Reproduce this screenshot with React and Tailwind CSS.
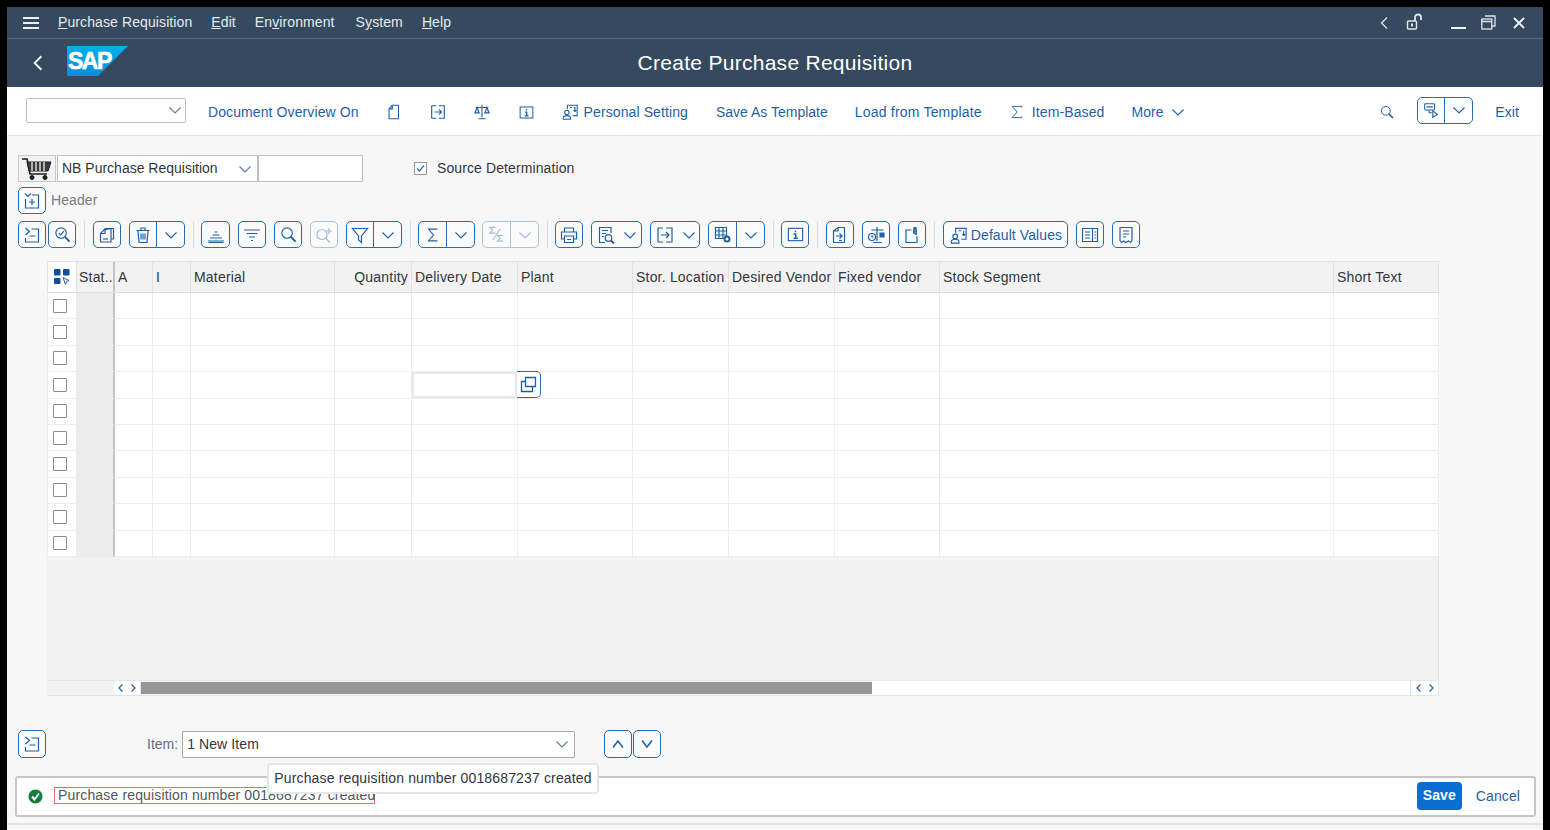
import React from 'react';

const S = ({ children, s = 20, vb = 20, sw = 1.2, className = '' }) => (
  <svg width={s} height={s} viewBox={`0 0 ${vb} ${vb}`} fill="none" stroke="currentColor" strokeWidth={sw} className={`shrink-0 ${className}`}>{children}</svg>
);
const Chev = ({ s = 14, className = '' }) => (
  <S s={s} vb={14} sw={1.1} className={className}><path d="M1.500 4.500 7 10l5.500-5.500" /></S>
);
const Doc = ({ s = 18 }) => <S s={s}><path d="M8 2.500h7v15H4.500V6.500z" /><path d="M8 2.500v4h-3.500" strokeWidth="1.500" /></S>;
const ExportI = ({ s = 18 }) => <S s={s}><path d="M8 3H3v14h5M11 3h6v14h-6" /><path d="M6 10h8M11 7l3 3-3 3" /></S>;
const Scale = ({ s = 18 }) => <S s={s}><path d="M10 2v14M6 17.500h8M3 5h14" /><path d="M4.500 5 2 11h5zM15.500 5 13 11h5z" fill="currentColor" fillOpacity=".25" /></S>;
const Info = ({ s = 17 }) => <S s={s}><rect x="2.500" y="3.500" width="15" height="13" /><path d="M10 6v1.600M8 9.500h2.200V14M8 14h4.400" strokeWidth="1.600" /></S>;
const Person = () => <S s={18}><circle cx="6.500" cy="10.500" r="2.400" /><path d="M2.500 18v-1.500c0-1.500 1.500-2.500 4-2.500s4 1 4 2.500V18z" /><path d="M7 7V2.500h11V14h-5M10 5h2M14 5h2M14 8l1.500 1.500L17 8M15.500 5v4" /></S>;
const DefI = () => <S s={19}><circle cx="6.500" cy="11" r="2.400" /><path d="M2.500 18v-1.500c0-1.500 1.500-2.500 4-2.500s4 1 4 2.500V18z" /><path d="M7 7V2.500h11V14h-5M10 5h3M15.500 5v5M14 8.500l1.500 1.500L17 8.500" /></S>;
const Sigma = ({ s = 18 }) => <S s={s}><path d="M15 3.500H5l5.500 6.500L5 16.500h10" /></S>;
const Search = ({ s = 19 }) => <S s={s}><circle cx="8.500" cy="8.500" r="5.500" /><path d="m12.500 12.500 5 5" strokeWidth="2.200" /></S>;
const Expand = ({ plus }) => plus ? (
  <S><path d="m3 2.500 3 3 3-3M10 4h6.500v13H3.500V8" /><path d="M10 8v6M7 11h6" /></S>
) : (
  <S><path d="m3.500 3 4 3.500-4 3.500M9.500 4h7v13H3.500v-4M7.500 11h6" /></S>
);

const Btn = ({ children, w = 'w-[28px]', off, tall, className = '' }) => (
  <div className={`${tall ? 'h-[28px]' : 'h-[27px]'} ${w} shrink-0 flex items-center justify-center rounded-[5px] border bg-[#fbfbfb] ${off ? 'border-[#a9c4e0] text-[#a0bedc]' : 'border-[#2a6ab0] text-[#1f5fa6]'} ${className}`}>{children}</div>
);
const Split = ({ children, w = 'w-[57px]', off, className = '' }) => (
  <div className={`h-[27px] ${w} shrink-0 flex rounded-[5px] border bg-[#fbfbfb] ${off ? 'border-[#a9c4e0] text-[#a0bedc]' : 'border-[#2a6ab0] text-[#1f5fa6]'} ${className}`}>
    <div className={`flex-1 flex items-center justify-center border-r ${off ? 'border-[#a9c4e0]' : 'border-[#2a6ab0]'}`}>{children}</div>
    <div className="w-[27px] flex items-center justify-center"><Chev /></div>
  </div>
);
const Sep = ({ className = '' }) => <div className={`w-px h-[27px] bg-[#dcdcdc] shrink-0 ${className}`} />;

const widths = ['w-[30px]', 'w-[38px]', 'w-[38px]', 'w-[38px]', 'w-[144px]', 'w-[77px]', 'w-[106px]', 'w-[115px]', 'w-[96px]', 'w-[106px]', 'w-[105px]', 'w-[394px]', 'w-[105px]'];
const heads = ['', 'Stat..', 'A', 'I', 'Material', 'Quantity', 'Delivery Date', 'Plant', 'Stor. Location', 'Desired Vendor', 'Fixed vendor', 'Stock Segment', 'Short Text'];

const rows = [0, 1, 2, 3, 4, 5, 6, 7, 8, 9];

export default function App() {
  return (
    <div className="relative w-[1550px] h-[830px] bg-black overflow-hidden pl-[7px] pt-[7px] font-['Liberation_Sans',sans-serif] tracking-[.1px]">
      <div className="w-[1536px] h-[823px] bg-[#f7f7f7] flex flex-col text-[#32363a]">
        {/* menu bar */}
        <div className="h-[32px] bg-[#354a5f] border-b border-[#536a80] flex items-center text-[#e6ebf0] text-[14px] shrink-0">
          <svg width="16" height="12" viewBox="0 0 16 12" className="ml-[16px]" fill="#eef2f6"><rect width="16" height="2" /><rect y="5" width="16" height="2" /><rect y="10" width="16" height="2" /></svg>
          <span className="ml-[19px]"><u>P</u>urchase Requisition</span>
          <span className="ml-[19px]"><u>E</u>dit</span>
          <span className="ml-[19px]">En<u>v</u>ironment</span>
          <span className="ml-[21px]">S<u>y</u>stem</span>
          <span className="ml-[19px]"><u>H</u>elp</span>
          <div className="ml-auto flex items-center">
            <S s={14} vb={14} sw={1.200}><path d="M10 1.500 4.500 7l5.500 5.500" /></S>
            <svg width="18" height="18" viewBox="0 0 18 18" fill="none" stroke="#dfe5ea" strokeWidth="1.400" className="ml-[15px] -mt-[2px]"><rect x="1.500" y="8" width="9" height="8" rx="1" /><path d="M6 10.500v3" strokeWidth="2" /><path d="M9 8V4.500C9 2.500 10.500 1.500 12 1.500s3 1 3 3V7" strokeWidth="1.800" /></svg>
            <div className="ml-[27px] mt-[10px] w-[15px] h-[2px] bg-[#eef2f6]" />
            <svg width="15" height="15" viewBox="0 0 15 15" fill="none" stroke="#dfe5ea" strokeWidth="1.300" className="ml-[15px]"><rect x=".8" y="4" width="10" height="10" /><path d="M.8 6.500h10M4 1h10v10h-3" /></svg>
            <svg width="12" height="12" viewBox="0 0 12 12" stroke="#eef2f6" strokeWidth="1.800" className="ml-[17px] mr-[18px]"><path d="m1 1 10 10M11 1 1 11" /></svg>
          </div>
        </div>
        {/* title bar */}
        <div className="relative h-[48px] bg-[#354a5f] flex items-center shrink-0">
          <S s={18} vb={16} sw={1.600} className="ml-[22px] text-white"><path d="M11 2 5 8l6 6" /></S>
          <svg width="62" height="30" viewBox="0 0 62 30" className="ml-[20px] -mt-[4px]">
            <defs><linearGradient id="sap" x1="0" y1="0" x2="0" y2="1"><stop offset="0" stopColor="#00b1eb" /><stop offset="1" stopColor="#0a8fd6" /></linearGradient></defs>
            <polygon points="0,0 61,0 31,30 0,30" fill="url(#sap)" />
            <text x="1" y="23" fontFamily="Liberation Sans" fontWeight="700" fontSize="23" letterSpacing="-1.500" fill="#fff" stroke="#fff" strokeWidth=".6">SAP</text>
          </svg>
          <div className="absolute inset-0 flex items-center justify-center text-white text-[21px] tracking-[.28px]">Create Purchase Requisition</div>
        </div>
        {/* action toolbar */}
        <div className="h-[49px] pt-[2px] bg-white border-b border-[#e5e5e5] flex items-center text-[#1f5fa6] text-[14px] shrink-0">
          <div className="ml-[19px] -mt-[4px] w-[160px] h-[25px] bg-white border border-[#bfbfbf] rounded-[2px] flex items-center justify-end pr-[3px] text-[#5a7ea8]"><Chev /></div>
          <span className="ml-[22px]">Document Overview On</span>
          <div className="ml-[26px]"><Doc /></div>
          <div className="ml-[26px]"><ExportI /></div>
          <div className="ml-[26px]"><Scale /></div>
          <div className="ml-[27px]"><Info /></div>
          <div className="ml-[26px]"><Person /></div>
          <span className="ml-[5px]">Personal Setting</span>
          <span className="ml-[28px] tracking-normal">Save As Template</span>
          <span className="ml-[27px] tracking-[.2px]">Load from Template</span>
          <div className="ml-[27px]"><S s={16}><path d="M16 4.500V3H4l6 7-6 7h12v-1.500" /></S></div>
          <span className="ml-[7px]">Item-Based</span>
          <span className="ml-[27px]">More</span>
          <Chev className="ml-[7px]" />
          <div className="ml-auto flex items-center">
            <Search s={16} />
            <div className="ml-[22px] -mt-[4px] w-[56px] h-[27px] rounded-[5px] border border-[#2a6ab0] flex">
              <div className="flex-1 flex items-center justify-center border-r border-[#2a6ab0]">
                <S s={18}><rect x="3" y="3" width="11" height="7" rx="1" /><path d="M5 6.500h7M8 10v3h3M12 11l5 4-5 3z" /></S>
              </div>
              <div className="w-[27px] flex items-center justify-center"><Chev /></div>
            </div>
            <span className="ml-[22px] mr-[24px]">Exit</span>
          </div>
        </div>

        {/* header selection */}
        <div className="mt-[19px] ml-[11px] h-[27px] flex items-center text-[14px] shrink-0">
          <div className="w-[38px] h-[27px] border border-[#c9c9c9] bg-[#f2f2f2] flex items-center justify-center">
            <svg width="32" height="24" viewBox="0 0 32 24" fill="none" stroke="#1c1c1c"><path d="M1 2h5l3 15h17" strokeWidth="1.600" /><path d="M6 5h24l-3 9H8z" fill="#3a3a3a" /><path d="M11 5v9M15 5v9M19 5v9M23 5v9" stroke="#f2f2f2" strokeWidth="1.300" /><circle cx="11" cy="20.500" r="2" fill="#1c1c1c" /><circle cx="24" cy="20.500" r="2" fill="#1c1c1c" /></svg>
          </div>
          <div className="ml-px w-[201px] h-[27px] bg-white border border-[#bfbfbf] flex items-center pl-[4px] pr-[5px] justify-between tracking-normal">
            <span>NB Purchase Requisition</span><Chev className="text-[#5a7ea8]" />
          </div>
          <div className="w-[105px] h-[27px] bg-white border border-[#bfbfbf]" />
          <div className="ml-[51px] w-[13px] h-[13px] bg-white border border-[#9a9a9a] flex items-center justify-center text-[#3a6ea8]">
            <svg width="11" height="11" viewBox="0 0 11 11" fill="none" stroke="currentColor" strokeWidth="1.300"><path d="m2 5.500 2.500 2.500L9 2.500" /></svg>
          </div>
          <span className="ml-[10px]">Source Determination</span>
        </div>
        <div className="mt-[5px] ml-[11px] h-[27px] flex items-center text-[14px] text-[#7a7a7a] shrink-0">
          <Btn><Expand plus /></Btn>
          <span className="ml-[5px]">Header</span>
        </div>

        {/* grid toolbar */}
        <div className="mt-[7px] ml-[11px] h-[27px] flex items-center gap-2 text-[14px] shrink-0">
          <div className="flex gap-[2px]">
            <Btn><Expand /></Btn>
            <Btn><S s={19}><circle cx="8.500" cy="8.500" r="5.500" /><path d="m6 8.500 2 2 3.500-4" /><path d="m12.500 12.500 5 5" strokeWidth="2" /></S></Btn>
          </div>
          <Sep />
          <Btn><S><path d="M3.500 8.500 8 4v-.5h8.500V14H14" /><path d="M3.500 8.500h4.500V5L11 4h3v13H3.500z" /><path d="M6 14h5" /></S></Btn>
          <Split w="w-[56px]"><S><path d="M3.500 5.500h13M8 5.500V3h4v2.500M5 5.500l1 12h8l1-12M8 8.500v6M10 8.500v6M12 8.500v6" /></S></Split>
          <Sep className="-mr-px" />
          <Btn w="w-[29px]"><S><path d="M2 16h16M4 13h12M6.500 10h7M8.500 7h3M2.500 17.500h15" /></S></Btn>
          <Btn><S><path d="M2 5h16M4.500 8.500h11M7 12h6M9 15.500h2" /></S></Btn>
          <Btn><Search /></Btn>
          <Btn off><S><circle cx="8" cy="9.500" r="5" /><path d="m11.500 13 4.500 4.500M15 3v6M12 6h6" /></S></Btn>
          <Split w="w-[56px]"><S><path d="M2.500 3.500h15L11.500 11v6.500L8.500 15v-4z" /></S></Split>
          <Sep className="-mr-px" />
          <Split><Sigma /></Split>
          <Split off className="-ml-px"><S s={19}><path d="M9 2.500H3l3 3-3 3h6M17 11h-6l3 3-3 3h6M6 16 14 4" /></S></Split>
          <Sep className="-mr-px" />
          <Btn><S><path d="M5.500 7V3h9v4M5 14H2.500V7h15v7H15" /><path d="M5.500 11h9v6.500h-9zM8 14.500h4" /></S></Btn>
          <Btn w="w-[51px]"><div className="flex items-center gap-[7px]"><S><path d="M15 8V2.500H3.500v15H9M6 5.500h6M6 8.500h4M6 11.500h2" /><circle cx="12.500" cy="13" r="3.300" /><path d="m15 15.500 3 3" strokeWidth="1.800" /></S><Chev /></div></Btn>
          <Btn w="w-[50px]"><div className="flex items-center gap-[7px]"><ExportI s={20} /><Chev /></div></Btn>
          <Split><S><path d="M2.500 2.500h11v11h-11zM2.500 6h11M2.500 10h11M6 2.500v11M10 2.500v11" /><circle cx="14" cy="14" r="2.500" fill="#fbfbfb" strokeWidth="2" /></S></Split>
          <Sep className="-mr-px" />
          <Btn><Info s={19} /></Btn>
          <Sep />
          <Btn><S><path d="M3.500 6 8 2.500h6.500v15h-11zM3.500 6H8V2.500" /><path d="M6 11h6M9.500 8.500 12 11l-2.500 2.500" /><path d="M9 15.500h3" /></S></Btn>
          <Btn><S><path d="M11 2v14M7 17.500h9M5.500 5h12" /><circle cx="6" cy="12" r="3.500" /><path d="M6 10v2h1.500" /><path d="M14 8h4v4h-4z" fill="currentColor" /></S></Btn>
          <Btn><S><path d="M9.500 5H4v12.500h11V11" /><path d="M12 9V4c0-1 .5-1.500 1-1.500s1 .5 1 1.500v6" strokeWidth="1.700" /></S></Btn>
          <Sep />
          <Btn w="w-[125px]"><div className="flex items-center gap-[3px] text-[14px] pt-[1px]"><DefI /><span>Default Values</span></div></Btn>
          <Btn><S><path d="M2.500 3.500h15v13h-15zM12.500 3.500v13M5 7h5M5 10h5M5 13h5M14.500 7h1.500M14.500 10h1.500M14.500 13h1.500" /></S></Btn>
          <Btn><S><path d="M4 2.500h12v13l-1.500 2-2-1.500-2.500 1.500L7.500 16l-2 1.500L4 15.500zM7 6h6M7 9h6M7 12h3" /></S></Btn>
        </div>

        {/* table */}
        <div className="mt-[13px] ml-[40px] w-[1392px] h-[435px] border-y border-r border-[#e2e2e2] bg-[#f2f2f2] flex flex-col text-[14px] tracking-[.2px] shrink-0">
          <div className="h-[31px] flex border-b border-[#dcdcdc] shrink-0">
            {heads.map((h, i) => (
              <div key={i} className={`${widths[i]} shrink-0 h-full flex items-center border-r border-[#e2e2e2] ${i === 0 ? 'bg-white justify-center border-l' : i === 5 ? 'justify-end pr-[3px] whitespace-nowrap' : i === 1 ? 'border-r-[2px] border-r-[#c4c4c4] pl-[2px] whitespace-nowrap overflow-hidden' : 'pl-[3px] whitespace-nowrap overflow-hidden'}`}>
                {i === 0 ? (
                  <svg width="16" height="16" viewBox="0 0 16 16" fill="#0b4f9e"><rect x="0" y="0" width="6.500" height="6.500" rx="1" /><rect x="9" y="0" width="6.500" height="6.500" rx="1" /><rect x="0" y="9" width="6.500" height="6" rx="1" /><path d="m9 8.500 6 3-2.500 1-1 3z" fill="#fff" stroke="#0b4f9e" strokeWidth=".9" /></svg>
                ) : h}
              </div>
            ))}
          </div>
          {rows.map((r) => (
            <div key={r} className="h-[26.4px] flex shrink-0">
              {widths.map((w, i) => (
                <div key={i} className={`${w} relative shrink-0 h-full border-b border-r border-[#ececec] ${i === 0 ? 'bg-white flex items-center justify-center border-l pr-[5px]' : i === 1 ? 'bg-[#ececec] border-r-[2px] border-r-[#c4c4c4]' : 'bg-white'}`}>
                  {i === 0 && <div className="w-[14px] h-[14px] border border-[#8c8c8c] bg-white rounded-[1px]" />}
                  {r === 3 && i === 6 && (
                    <>
                      <div className="absolute left-[0px] top-[0px] w-[105px] h-[26px] border-2 border-[#e8e8e8] bg-white" />
                      <div className="absolute left-[105px] top-[-1px] z-10 w-[24px] h-[27px] bg-white rounded-r-[5px] border border-l-0 border-[#2a6ab0] flex items-center justify-center text-[#1f5fa6]">
                        <svg width="17" height="17" viewBox="0 0 17 17" fill="none" stroke="currentColor" strokeWidth="1.300"><path d="M1.500 5.500h11v10h-11z" /><path d="M5.500 1.500h10v9h-10z" fill="#fff" /></svg>
                      </div>
                    </>
                  )}
                </div>
              ))}
            </div>
          ))}
          <div className="flex-1" />
          <div className="h-[15px] flex items-center border-t border-[#e6e6e6] shrink-0">
            <div className="w-[67px] h-full shrink-0" />
            <div className="w-[27px] h-full bg-white flex items-center justify-center gap-[8px] text-[#1f5fa6] shrink-0 border-r border-[#e6e6e6]">
              <svg width="5" height="8" viewBox="0 0 5 8" fill="none" stroke="currentColor" strokeWidth="1.200"><path d="M4.500.5 1 4l3.500 3.500" /></svg>
              <svg width="5" height="8" viewBox="0 0 5 8" fill="none" stroke="currentColor" strokeWidth="1.200"><path d="M.5.5 4 4 .5 7.500" /></svg>
            </div>
            <div className="w-[731px] h-[12px] bg-[#969696] shrink-0" />
            <div className="flex-1 h-full bg-white" />
            <div className="w-[28px] h-full bg-white flex items-center justify-center gap-[8px] text-[#1f5fa6] shrink-0 border-l border-[#e6e6e6]">
              <svg width="5" height="8" viewBox="0 0 5 8" fill="none" stroke="currentColor" strokeWidth="1.200"><path d="M4.500.5 1 4l3.500 3.500" /></svg>
              <svg width="5" height="8" viewBox="0 0 5 8" fill="none" stroke="currentColor" strokeWidth="1.200"><path d="M.5.5 4 4 .5 7.500" /></svg>
            </div>
          </div>
        </div>

        {/* item row */}
        <div className="mt-[34px] ml-[11px] h-[28px] flex items-center text-[14px] shrink-0">
          <Btn tall><Expand /></Btn>
          <span className="ml-[101px] text-[#6a6d70] tracking-normal">Item:</span>
          <div className="ml-[4px] w-[393px] h-[27px] bg-white border border-[#a8a8a8] rounded-[1px] flex items-center justify-between pl-[4px] pr-[5px]">
            <span>1 New Item</span><Chev className="text-[#5a7ea8]" />
          </div>
          <div className="ml-[29px] flex gap-[1px]">
            <Btn tall><S s={14} vb={14} sw={1.500}><path d="M2 10.500 7 4l5 6.500" /></S></Btn>
            <Btn tall><S s={14} vb={14} sw={1.500}><path d="m2 3.500 5 6.500 5-6.500" /></S></Btn>
          </div>
        </div>

        {/* message bar */}
        <div className="relative mt-[18px] ml-[8px] w-[1521px] h-[41px] bg-white border-2 border-[#c6c6c6] rounded-[3px] flex items-center text-[14px] shrink-0">
          <svg width="15" height="15" viewBox="0 0 15 15" className="ml-[11px]"><circle cx="7.500" cy="7.500" r="7" fill="#107e3e" /><path d="m4 7.500 2.500 3L11 4.500" fill="none" stroke="#fff" strokeWidth="2" /></svg>
          <div className="ml-[11px] -mt-[2px] w-[321px] h-[17px] pb-[1px] border border-[#ee6a6a] flex items-center pl-[3px] text-[#52565a] whitespace-nowrap leading-none tracking-[.15px]">Purchase requisition number 0018687237 created</div>
          <div className="ml-auto mr-[8px] flex items-center gap-[14px]">
            <div className="-mt-[2px] w-[45px] h-[28px] bg-[#0a6ed1] rounded-[4px] text-white font-bold flex items-center justify-center">Save</div>
            <span className="text-[#1f5fa6] mr-[6px]">Cancel</span>
          </div>
          <div className="absolute left-[250px] top-[-15px] h-[31px] w-[332px] bg-white border-2 border-[#e6e6e6] rounded-[4px] flex items-center justify-center whitespace-nowrap tracking-[.15px]">Purchase requisition number 0018687237 created</div>
        </div>
        <div className="mt-[6px] h-[2px] bg-[#e3e3e3] shrink-0" />
      </div>
    </div>
  );
}
